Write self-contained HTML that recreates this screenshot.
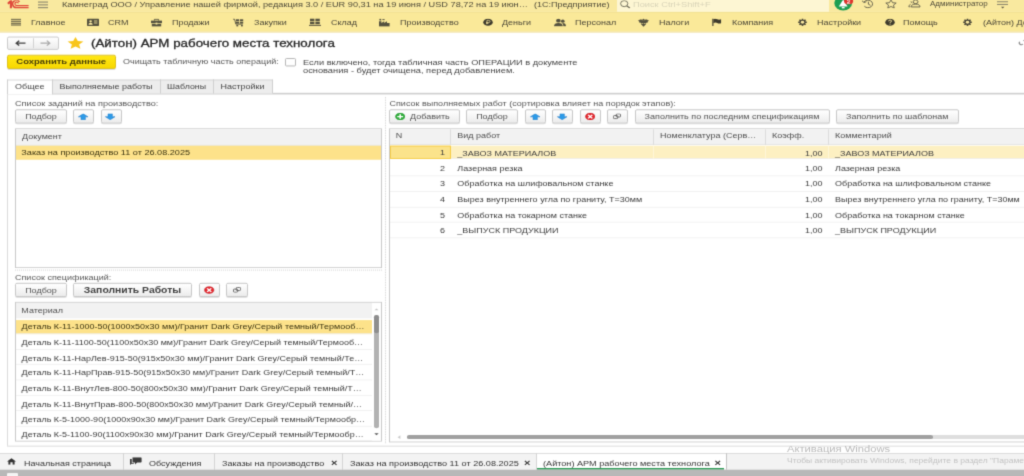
<!DOCTYPE html>
<html lang="ru">
<head>
<meta charset="utf-8">
<title>(Айтон) АРМ рабочего места технолога</title>
<style>
*{box-sizing:border-box;margin:0;padding:0}
html,body{width:1024px;height:476px;overflow:hidden;background:#fff}
body{font-family:"Liberation Sans",sans-serif;font-size:9px;color:#3a3a3a;position:relative}
#W{position:absolute;left:-8px;top:-8px;width:1040px;height:595.36px;background:#fff;transform-origin:0 0;transform:scaleY(0.826389);filter:url(#bl)}
#V{position:absolute;left:8px;top:9.68px;width:1024px;height:576.00px}
.a{position:absolute;white-space:nowrap}
.t{position:absolute;white-space:nowrap;line-height:14.52px;height:14.52px}
#bar1{left:-8px;top:-4.84px;width:1040px;height:19.36px;background:#f9e99f}
#bar2{left:-8px;top:14.52px;width:1040px;height:24.20px;background:#fae999;border-top:1px solid #f0de92}
#barline{left:-8px;top:38.24px;width:1040px;height:1.45px;background:#ecd98c}
#search{left:617px;top:-4.84px;width:212px;height:18.88px;background:#fdf6d3}
.mi{position:absolute;top:19.97px;height:14.52px;line-height:14.52px;color:#4a4636;white-space:nowrap}
.btn{position:absolute;height:17.18px;border:1px solid #c3c3c3;border-radius:2px;background:linear-gradient(#ffffff,#ececec);text-align:center;line-height:16.46px;color:#525252;white-space:nowrap;box-shadow:0 1px 0 #d9d9d9}
.tab{position:absolute;top:96.20px;height:17.18px;line-height:15.25px;text-align:center;border:1px solid #cfcfcf;border-bottom:none;background:#ededed;color:#444}
.tab.act{background:#fff;height:18.39px;z-index:2}
.grid{position:absolute;border:1px solid #c9c9c9;background:#fff;overflow:hidden}
.hd{position:absolute;background:#f2f2f2;color:#4d4d4d}
.row{position:absolute;left:0;height:18.64px;line-height:18.15px;border-bottom:1px solid #efefef;white-space:nowrap}
.bt{position:absolute;top:550.10px;height:20.57px;line-height:20.57px;white-space:nowrap;color:#333}
.sep{position:absolute;top:548.17px;width:1px;height:20.57px;background:#d4d4d4}
</style>
</head>
<body>
<svg preserveAspectRatio="none" width="0" height="0" style="position:absolute"><defs><filter id="bl" x="0" y="0" width="100%" height="100%" color-interpolation-filters="sRGB"><feConvolveMatrix order="3" kernelMatrix="1 5 1 5 25 5 1 5 1" divisor="49" edgeMode="duplicate" preserveAlpha="true"/></filter></defs></svg>
<div id="W"><div id="V">
<!-- TOP BARS -->
<div class="a" id="bar1"></div>
<div class="a" id="bar2"></div>
<div class="a" id="barline"></div>
<div class="a" id="search"></div>

<!-- 1C logo -->
<svg preserveAspectRatio="none" class="a" style="left:7px;top:0;width:23px;height:10.89px" viewBox="0 0 23 9">
  <path d="M0.9 3.4 L3.9 0.6 L3.9 8" fill="none" stroke="#e0483a" stroke-width="2.1"/>
  <path d="M12.4 1.6 A3.7 3.7 0 1 0 9.6 7.3 L21.6 7.3" fill="none" stroke="#e0483a" stroke-width="1.5"/>
  <path d="M11.3 3.2 A1.7 1.7 0 1 0 9.8 5.2 L21.6 5.2" fill="none" stroke="#e0483a" stroke-width="1.1"/>
</svg>
<!-- hamburger -->
<svg preserveAspectRatio="none" class="a" style="left:38px;top:1.21px;width:10px;height:9.68px" viewBox="0 0 10 8"><path d="M0 1h10M0 3.8h10M0 6.6h10" stroke="#7d7a68" stroke-width="1"/></svg>
<div class="t" style="left:62px;top:-1.94px;font-size:9.2px;color:#4d4937">Камнеград ООО / Управление нашей фирмой, редакция 3.0 / EUR 90,31 на 19 июня / USD 78,72 на 19 июн…</div>
<div class="t" style="left:534px;top:-1.94px;font-size:9px;color:#4d4937">(1С:Предприятие)</div>
<!-- search -->
<svg preserveAspectRatio="none" class="a" style="left:619px;top:0.48px;width:12px;height:10.16px" viewBox="0 0 12 10"><circle cx="5.2" cy="4" r="3.6" fill="none" stroke="#6a6756" stroke-width="1"/><path d="M7.8 6.6l3 2.6" stroke="#6a6756" stroke-width="1.3"/></svg>
<div class="t" style="left:633px;top:-1.21px;font-size:9.25px;color:#d9d4b8">Поиск Ctrl+Shift+F</div>
<!-- bell -->
<svg preserveAspectRatio="none" class="a" style="left:833px;top:-3.63px;width:22px;height:16.94px" viewBox="0 0 22 14">
  <ellipse cx="10.2" cy="6" rx="8.9" ry="7.5" fill="#1e9e52"/>
  <path d="M10.2 2.6 L14.6 9.6 L5.8 9.6 Z" fill="#fff"/><rect x="8.8" y="10" width="2.8" height="1.4" fill="#fff"/>
  <ellipse cx="15.6" cy="4" rx="4.6" ry="3.4" fill="#e0352e"/>
  <path d="M14 3.8q1.4-1.6 2.8 0q0.2 0.8-2.8 2.4h3.2" fill="none" stroke="#fff" stroke-width="0.8"/>
</svg>
<!-- history -->
<svg preserveAspectRatio="none" class="a" style="left:861px;top:-0.36px;width:14px;height:10.89px" viewBox="0 0 14 11">
  <path d="M3 3.2 A4.6 4.6 0 1 1 3.4 8.4" fill="none" stroke="#5c5947" stroke-width="1"/>
  <path d="M1 1.6l2 2.2 2.4-1" fill="none" stroke="#5c5947" stroke-width="1"/>
  <path d="M7.4 2.8v3l2 1.4" fill="none" stroke="#5c5947" stroke-width="1"/>
</svg>
<!-- star outline -->
<svg preserveAspectRatio="none" class="a" style="left:884.5px;top:-0.24px;width:12px;height:10.65px" viewBox="0 0 13 11">
  <path d="M6.5 0.6l1.7 3.5 3.9.4-2.9 2.6.8 3.7-3.5-2-3.5 2 .8-3.7L.9 4.5l3.9-.4z" fill="none" stroke="#5c5947" stroke-width="1"/>
</svg>
<!-- user -->
<svg preserveAspectRatio="none" class="a" style="left:908px;top:-0.24px;width:14px;height:10.41px" viewBox="0 0 14 11">
  <circle cx="7.6" cy="3" r="2.4" fill="none" stroke="#5c5947" stroke-width="1"/>
  <path d="M3.2 9.6q0-3.6 4.4-3.6t4.4 3.6z" fill="none" stroke="#5c5947" stroke-width="1"/>
  <path d="M4.4 4.4q-1.6-.4-1.4-2M2.6 6.2q-1.8.8-1.8 3.2h1.6" fill="none" stroke="#5c5947" stroke-width="0.9"/>
</svg>
<div class="t" style="left:930px;top:-1.94px;font-size:8px;color:#4d4937">Администратор</div>
<!-- menu lines -->
<svg preserveAspectRatio="none" class="a" style="left:997px;top:0;width:12px;height:12.10px" viewBox="0 0 12 10"><path d="M0 1.5h11M0 4.2h11" stroke="#7d7a68" stroke-width="0.9"/><path d="M4 6.4h3.4l-1.7 1.8z" fill="#5c5947"/></svg>

<!-- SECTION MENU -->
<svg preserveAspectRatio="none" class="a" style="left:11px;top:22.63px;width:10px;height:9.20px" viewBox="0 0 10 9"><path d="M0 1h10M0 3.3h10M0 5.6h10M0 7.9h10" stroke="#55523f" stroke-width="1.2"/></svg>
<div class="mi" style="left:31px">Главное</div>
<svg preserveAspectRatio="none" class="a" style="left:87px;top:22.63px;width:12px;height:9.20px" viewBox="0 0 12 9"><rect x="0" y="0" width="12" height="9" rx="1" fill="#55523f"/><circle cx="3.6" cy="3.4" r="1.3" fill="#fae9a0"/><path d="M1.5 7.4q0-2.2 2.1-2.2t2.1 2.2z" fill="#fae9a0"/><path d="M7 3h3.4M7 5.4h3.4" stroke="#fae9a0" stroke-width="0.9"/></svg>
<div class="mi" style="left:108px">CRM</div>
<svg preserveAspectRatio="none" class="a" style="left:151px;top:22.14px;width:11px;height:10.16px" viewBox="0 0 11 10"><path d="M3.4 2.6v-1.6h4.2v1.6" fill="none" stroke="#55523f" stroke-width="1"/><rect x="0" y="2.6" width="11" height="3" fill="#55523f"/><rect x="0.8" y="6.4" width="9.4" height="3.2" fill="#55523f"/><rect x="4.6" y="5" width="1.8" height="2.2" fill="#fae9a0"/></svg>
<div class="mi" style="left:172px">Продажи</div>
<svg preserveAspectRatio="none" class="a" style="left:233px;top:22.14px;width:11px;height:10.16px" viewBox="0 0 11 10"><path d="M0 0.8h1.6l1.2 6h7" fill="none" stroke="#55523f" stroke-width="1"/><rect x="3" y="1" width="3.2" height="2.2" fill="#55523f"/><rect x="7" y="1" width="3.2" height="2.2" fill="#55523f"/><rect x="3" y="3.9" width="3.2" height="2.2" fill="#55523f"/><rect x="7" y="3.9" width="3.2" height="2.2" fill="#55523f"/><rect x="3.4" y="7.8" width="1.8" height="1.8" fill="#55523f"/><rect x="8" y="7.8" width="1.8" height="1.8" fill="#55523f"/></svg>
<div class="mi" style="left:254px">Закупки</div>
<svg preserveAspectRatio="none" class="a" style="left:309px;top:22.63px;width:12px;height:9.20px" viewBox="0 0 12 9"><rect x="1" y="0" width="4.4" height="3" fill="#55523f"/><rect x="6.4" y="0" width="4.4" height="3" fill="#55523f"/><rect x="1" y="3.8" width="4.4" height="3" fill="#55523f"/><rect x="6.4" y="3.8" width="4.4" height="3" fill="#55523f"/><rect x="0" y="7.6" width="12" height="1.2" fill="#55523f"/></svg>
<div class="mi" style="left:331px">Склад</div>
<svg preserveAspectRatio="none" class="a" style="left:379px;top:22.14px;width:11px;height:10.16px" viewBox="0 0 11 10"><path d="M0 9.6V3.4h2.4v2l2.8-2v2l2.8-2v2h2.6V9.6z" fill="#55523f"/><rect x="0.4" y="0.4" width="1.8" height="2" fill="#55523f"/><rect x="3.4" y="0.8" width="2.2" height="1.2" fill="#55523f"/></svg>
<div class="mi" style="left:400px">Производство</div>
<svg preserveAspectRatio="none" class="a" style="left:482.5px;top:22.63px;width:10px;height:9.20px" viewBox="0 0 11 11"><circle cx="5.5" cy="5.5" r="5.2" fill="#3d3a2c"/><path d="M4.3 8.4V2.8h1.9a1.5 1.5 0 0 1 0 3.1H3.4M3.4 7.1h2.6" fill="none" stroke="#fae9a0" stroke-width="0.9"/></svg>
<div class="mi" style="left:502px">Деньги</div>
<svg preserveAspectRatio="none" class="a" style="left:554px;top:22.14px;width:12px;height:10.16px" viewBox="0 0 12 10"><circle cx="4.4" cy="2.6" r="2.3" fill="#55523f"/><path d="M0 9.4q0-4 4.4-4t4.4 4z" fill="#55523f"/><circle cx="8.8" cy="3.2" r="1.8" fill="#55523f"/><path d="M8.2 5.4q3.8-.2 3.8 4H9.4q0-2.4-1.2-4z" fill="#55523f"/></svg>
<div class="mi" style="left:575px">Персонал</div>
<svg preserveAspectRatio="none" class="a" style="left:638px;top:22.14px;width:11px;height:10.16px" viewBox="0 0 11 10"><path d="M5.5 0.6v9M5.5 3.2q-2.6-3-4.9-.6 1.4.6 1 2 1.4-.6 1.6 1.2 1-.6 2.3-.4M5.5 3.2q2.6-3 4.9-.6-1.4.6-1 2-1.4-.6-1.6 1.2-1-.6-2.3-.4M3.2 6.6l2.3 2.8 2.3-2.8" fill="#55523f" stroke="#55523f" stroke-width="0.8"/><circle cx="5.5" cy="1.4" r="1.1" fill="#55523f"/></svg>
<div class="mi" style="left:659px">Налоги</div>
<svg preserveAspectRatio="none" class="a" style="left:712.3px;top:22.14px;width:9.6px;height:9.20px" viewBox="0 0 11 10"><path d="M1 0v10" stroke="#3d3a2c" stroke-width="1.3"/><path d="M1.6 0.8q2.4-1 4.4.2t4.4 0v5.2q-2.4 1-4.4-.2t-4.4.2z" fill="#3d3a2c"/></svg>
<div class="mi" style="left:732px">Компания</div>
<svg preserveAspectRatio="none" class="a gear" style="left:798px;top:22.63px;width:9px;height:9.20px" viewBox="-5.5 -5.5 11 11"><g fill="#454234"><circle r="3.7"/><g id="teeth"><rect x="-1" y="-5.3" width="2" height="10.6"/><rect x="-1" y="-5.3" width="2" height="10.6" transform="rotate(45)"/><rect x="-1" y="-5.3" width="2" height="10.6" transform="rotate(90)"/><rect x="-1" y="-5.3" width="2" height="10.6" transform="rotate(135)"/></g></g><circle r="2.1" fill="#fae9a0"/></svg>
<div class="mi" style="left:817px">Настройки</div>
<svg preserveAspectRatio="none" class="a" style="left:884.5px;top:22.63px;width:10px;height:9.20px" viewBox="0 0 11 11"><circle cx="5.5" cy="5.5" r="5.2" fill="#3d3a2c"/><path d="M3.8 4.2q0-1.8 1.8-1.8t1.7 1.6q0 1-1.7 1.6v.9" fill="none" stroke="#fae9a0" stroke-width="1.1"/><rect x="5" y="7.6" width="1.2" height="1.2" fill="#fae9a0"/></svg>
<div class="mi" style="left:903px">Помощь</div>
<svg preserveAspectRatio="none" class="a gear" style="left:963px;top:22.63px;width:9px;height:9.20px" viewBox="-5.5 -5.5 11 11"><g fill="#454234"><circle r="3.7"/><rect x="-1" y="-5.3" width="2" height="10.6"/><rect x="-1" y="-5.3" width="2" height="10.6" transform="rotate(45)"/><rect x="-1" y="-5.3" width="2" height="10.6" transform="rotate(90)"/><rect x="-1" y="-5.3" width="2" height="10.6" transform="rotate(135)"/></g><circle r="2.1" fill="#fae9a0"/></svg>
<div class="mi" style="left:983px">(Айтон) Документы</div>

<!-- CONTENT PLACEHOLDER -->

<!-- HEADER ROW -->
<div class="a" style="left:7.2px;top:44.77px;width:52px;height:15.25px;border:1px solid #c6c6c6;border-radius:2px;background:linear-gradient(#fff,#ececec)"></div>
<div class="a" style="left:33px;top:45.98px;width:1px;height:12.83px;background:#d2d2d2"></div>
<svg preserveAspectRatio="none" class="a" style="left:15px;top:48.65px;width:11px;height:7.74px" viewBox="0 0 11 7"><path d="M10.5 3.5H2M4.2 0.8L1.2 3.5l3 2.7" fill="none" stroke="#3f3f3f" stroke-width="1.4"/></svg>
<svg preserveAspectRatio="none" class="a" style="left:40px;top:48.65px;width:11px;height:7.74px" viewBox="0 0 11 7"><path d="M0.5 3.5H9M6.8 0.8l3 2.7-3 2.7" fill="none" stroke="#a9a9a9" stroke-width="1.3"/></svg>
<svg preserveAspectRatio="none" class="a" style="left:67px;top:44.77px;width:17px;height:15.13px" viewBox="0 0 17 15"><path d="M8.5 0.4l2.3 5 5.6.5-4.3 3.6 1.3 5.2-4.9-2.8-4.9 2.8 1.3-5.2L.6 5.9l5.6-.5z" fill="#f8c51c"/></svg>
<div class="a" style="left:91px;top:43.32px;font-size:13.35px;line-height:19.36px;color:#262626;-webkit-text-stroke:0.35px #262626">(Айтон) АРМ рабочего места технолога</div>
<svg preserveAspectRatio="none" class="a" style="left:1018px;top:47.80px;width:11px;height:8.47px" viewBox="0 0 11 8"><path d="M5.6 2.2a2 2 0 0 1 3.2 2.6l-1.4 1.4M5 5.6a2 2 0 0 1-3.2-2.6" fill="none" stroke="#8a8a8a" stroke-width="1.2"/></svg>
<!-- SAVE ROW -->
<div class="a" style="left:6.8px;top:66.55px;width:108.8px;height:16.34px;border:1px solid #dcbc00;border-radius:2px;background:linear-gradient(#ffe715,#f8d800);text-align:center;line-height:13.92px;font-weight:bold;font-size:9.5px;color:#4a4008;box-shadow:0 1px 0 #cfcfcf">Сохранить данные</div>
<div class="t" style="left:123px;top:67.76px;color:#555">Очищать табличную часть операций:</div>
<div class="a" style="left:285px;top:69.94px;width:11px;height:10.65px;border:1px solid #b0b0b0;border-radius:1.5px;background:#fff"></div>
<div class="t" style="left:303px;top:67.89px;color:#444;font-size:9.2px">Если включено, тогда табличная часть ОПЕРАЦИИ в документе</div>
<div class="t" style="left:303px;top:78.29px;color:#444;font-size:9.27px">основания - будет очищена, перед добавлением.</div>
<!-- TABS -->
<div class="a" style="left:7px;top:112.78px;width:1030px;height:1.21px;background:#cfcfcf"></div>
<div class="tab act" style="left:7px;width:45.5px">Общее</div>
<div class="tab" style="left:51.5px;width:109px">Выполняемые работы</div>
<div class="tab" style="left:159.5px;width:54px;font-size:8.8px">Шаблоны</div>
<div class="tab" style="left:212.5px;width:60px">Настройки</div>
<div class="a" style="left:7px;top:113.75px;width:1px;height:425.95px;background:#dadada"></div>
<div class="a" style="left:7px;top:539.46px;width:1030px;height:1.21px;background:#d4d4d4"></div>
<!-- LEFT PANEL -->
<div class="t" style="left:15px;top:117.98px;color:#555;font-size:9.15px">Список заданий на производство:</div>
<div class="btn" style="left:15px;top:132.50px;width:52px;">Подбор</div>
<div class="btn" style="left:73px;top:132.50px;width:21px;"></div>
<div class="btn" style="left:100.5px;top:132.50px;width:21.5px;"></div>
<svg preserveAspectRatio="none" class="a" style="left:78.3px;top:136.98px;width:10.4px;height:7.99px" viewBox="0 0 11 9"><path d="M5.5 0.4L10.6 4.6H7.8V8.6H3.2V4.6H0.4z" fill="#2d9be8" stroke="#1b78c8" stroke-width="0.6"/></svg>
<svg preserveAspectRatio="none" class="a" style="left:105.3px;top:136.98px;width:10.4px;height:7.99px" viewBox="0 0 11 9"><path d="M5.5 8.6L10.6 4.4H7.8V0.4H3.2V4.4H0.4z" fill="#2d9be8" stroke="#1b78c8" stroke-width="0.6"/></svg>
<div class="grid" style="left:15px;top:154.89px;width:367px;height:169.41px">
  <div class="hd" style="left:0;top:0;width:365px;height:19.97px;line-height:19.97px;padding-left:6px;border-bottom:1px solid #e2e2e2">Документ</div>
  <div class="row" style="top:20.81px;width:365px;height:16.94px;line-height:16.46px;background:#fde28a;padding-left:5.3px;font-size:9.15px;color:#3a3310;border-bottom:none">Заказ на производство 11 от 26.08.2025</div>
</div>
<div class="t" style="left:15px;top:328.54px;color:#555">Список спецификаций:</div>
<div class="btn" style="left:15px;top:342.45px;width:52px;">Подбор</div>
<div class="btn" style="left:73px;top:342.45px;width:119px;font-weight:bold;font-size:10.4px;color:#3f3f3f">Заполнить Работы</div>
<div class="btn" style="left:199px;top:342.45px;width:21px;"></div>
<div class="btn" style="left:226px;top:342.45px;width:21.5px;"></div>
<svg preserveAspectRatio="none" class="a" style="left:204.3px;top:346.33px;width:10.4px;height:9.44px" viewBox="0 0 11 11"><circle cx="5.5" cy="5.5" r="5" fill="#e3262d" stroke="#b9151c" stroke-width="0.6"/><path d="M3.3 3l4.4 5M7.7 3L3.3 8" stroke="#fff" stroke-width="1.7"/></svg>
<svg preserveAspectRatio="none" class="a" style="left:233px;top:347.66px;width:8px;height:6.78px" viewBox="0 0 9 7"><rect x="0.5" y="2.6" width="4.8" height="3.9" rx="1.1" fill="none" stroke="#5e5e5e" stroke-width="1.1"/><rect x="3.7" y="0.5" width="4.8" height="3.9" rx="1.1" fill="none" stroke="#5e5e5e" stroke-width="1.1"/></svg>
<div class="a" style="left:15px;top:326.24px;width:367px;height:1.21px;border-top:1px dotted #d0d0d0"></div>
<div class="grid" id="g2" style="left:15px;top:365.45px;width:367px;height:168.81px">
  <div class="hd" style="left:0;top:0;width:358px;height:19.36px;line-height:19.36px;padding-left:5.3px">Материал</div>
  <div class="row" style="top:20.45px;width:358px;height:17.55px;background:#fde28a;"></div>
  <div class="t" style="left:5.6px;top:21.78px;color:#3a3310">Деталь К-11-1000-50(1000x50x30 мм)/Гранит Dark Grey/Серый темный/Термооб…</div>
  <div class="row" style="top:38.00px;width:358px;height:18.64px;"></div>
  <div class="t" style="left:5.6px;top:41.02px;">Деталь К-11-1100-50(1100x50x30 мм)/Гранит Dark Grey/Серый темный/Термооб…</div>
  <div class="row" style="top:56.63px;width:358px;height:18.64px;"></div>
  <div class="t" style="left:5.6px;top:59.66px;">Деталь К-11-НарЛев-915-50(915x50x30 мм)/Гранит Dark Grey/Серый темный/Те…</div>
  <div class="row" style="top:75.27px;width:358px;height:18.64px;"></div>
  <div class="t" style="left:5.6px;top:78.29px;">Деталь К-11-НарПрав-915-50(915x50x30 мм)/Гранит Dark Grey/Серый темный/Т…</div>
  <div class="row" style="top:93.90px;width:358px;height:18.64px;"></div>
  <div class="t" style="left:5.6px;top:96.93px;">Деталь К-11-ВнутЛев-800-50(800x50x30 мм)/Гранит Dark Grey/Серый темный/Т…</div>
  <div class="row" style="top:112.54px;width:358px;height:18.64px;"></div>
  <div class="t" style="left:5.6px;top:115.56px;">Деталь К-11-ВнутПрав-800-50(800x50x30 мм)/Гранит Dark Grey/Серый темный/…</div>
  <div class="row" style="top:131.17px;width:358px;height:18.64px;"></div>
  <div class="t" style="left:5.6px;top:134.20px;">Деталь К-5-1000-90(1000x90x30 мм)/Гранит Dark Grey/Серый темный/Термообр…</div>
  <div class="row" style="top:149.81px;width:358px;height:18.64px;"></div>
  <div class="t" style="left:5.6px;top:152.83px;">Деталь К-5-1100-90(1100x90x30 мм)/Гранит Dark Grey/Серый темный/Термообр…</div>
  <div class="a" style="left:356px;top:0;width:10px;height:166.99px;background:#fff"></div>
  <div class="a" style="left:357.5px;top:15.13px;width:5px;height:136.74px;background:#b2b2b2;border-radius:2.5px"></div>
  <div class="a" style="left:357.5px;top:15.13px;width:5px;height:21.78px;background:#8e8e8e;border-radius:2.5px"></div>
  <svg preserveAspectRatio="none" class="a" style="left:358px;top:6.05px;width:5px;height:4.11px" viewBox="0 0 5 4"><path d="M0.5 3L2.5 1l2 2z" fill="#c4c4c4"/></svg>
  <svg preserveAspectRatio="none" class="a" style="left:358px;top:156.71px;width:5px;height:4.11px" viewBox="0 0 5 4"><path d="M0.3 0.8h4.4L2.5 3.4z" fill="#555"/></svg>
</div>
<!-- SPLITTER -->
<div class="a" style="left:385px;top:117.38px;width:1px;height:418.69px;border-left:1px dotted #cdcdcd"></div>
<!-- RIGHT PANEL -->
<div class="t" style="left:389.5px;top:117.98px;color:#555;font-size:9px">Список выполняемых работ (сортировка влияет на порядок этапов):</div>
<div class="btn" style="left:389px;top:132.50px;width:71px;text-align:left;padding-left:20px">Добавить</div>
<svg preserveAspectRatio="none" class="a" style="left:394.8px;top:136.26px;width:10.4px;height:9.44px" viewBox="0 0 11 11"><circle cx="5.5" cy="5.5" r="5" fill="#2fae3a" stroke="#1e8a2a" stroke-width="0.6"/><path d="M5.5 2.4v6.2M2.4 5.5h6.2" stroke="#fff" stroke-width="1.7"/></svg>
<div class="btn" style="left:466px;top:132.50px;width:52px;">Подбор</div>
<div class="btn" style="left:524.5px;top:132.50px;width:21px;"></div>
<div class="btn" style="left:551.5px;top:132.50px;width:21px;"></div>
<div class="btn" style="left:579.5px;top:132.50px;width:21px;"></div>
<div class="btn" style="left:606.5px;top:132.50px;width:21px;"></div>
<svg preserveAspectRatio="none" class="a" style="left:529.8px;top:136.98px;width:10.4px;height:7.99px" viewBox="0 0 11 9"><path d="M5.5 0.4L10.6 4.6H7.8V8.6H3.2V4.6H0.4z" fill="#2d9be8" stroke="#1b78c8" stroke-width="0.6"/></svg>
<svg preserveAspectRatio="none" class="a" style="left:556.8px;top:136.98px;width:10.4px;height:7.99px" viewBox="0 0 11 9"><path d="M5.5 8.6L10.6 4.4H7.8V0.4H3.2V4.4H0.4z" fill="#2d9be8" stroke="#1b78c8" stroke-width="0.6"/></svg>
<svg preserveAspectRatio="none" class="a" style="left:584.8px;top:136.26px;width:10.4px;height:9.44px" viewBox="0 0 11 11"><circle cx="5.5" cy="5.5" r="5" fill="#e3262d" stroke="#b9151c" stroke-width="0.6"/><path d="M3.3 3l4.4 5M7.7 3L3.3 8" stroke="#fff" stroke-width="1.7"/></svg>
<svg preserveAspectRatio="none" class="a" style="left:613px;top:137.71px;width:8px;height:6.78px" viewBox="0 0 9 7"><rect x="0.5" y="2.6" width="4.8" height="3.9" rx="1.1" fill="none" stroke="#5e5e5e" stroke-width="1.1"/><rect x="3.7" y="0.5" width="4.8" height="3.9" rx="1.1" fill="none" stroke="#5e5e5e" stroke-width="1.1"/></svg>
<div class="btn" style="left:634.5px;top:132.50px;width:195px;">Заполнить по последним спецификациям</div>
<div class="btn" style="left:836px;top:132.50px;width:122.5px;">Заполнить по шаблонам</div>
<div class="grid" id="g3" style="left:389px;top:154.89px;width:640px;height:379.97px">
  <div class="hd" style="left:0;top:0;width:640px;height:19.60px;border-bottom:1px solid #e4e4e4"></div>
  <div class="t" style="left:5.8px;top:1.57px;color:#4d4d4d">N</div>
  <div class="t" style="left:67.3px;top:1.57px;color:#4d4d4d">Вид работ</div>
  <div class="t" style="left:270px;top:1.57px;color:#4d4d4d">Номенклатура (Серв…</div>
  <div class="t" style="left:382px;top:1.57px;color:#4d4d4d">Коэфф.</div>
  <div class="t" style="left:445px;top:1.57px;color:#4d4d4d">Комментарий</div>
  <div class="a" style="left:60px;top:0;width:1px;height:19.36px;background:#dcdcdc"></div>
  <div class="a" style="left:263.2px;top:0;width:1px;height:19.36px;background:#dcdcdc"></div>
  <div class="a" style="left:375.2px;top:0;width:1px;height:19.36px;background:#dcdcdc"></div>
  <div class="a" style="left:438.2px;top:0;width:1px;height:19.36px;background:#dcdcdc"></div>
  <div class="row" style="top:20.57px;width:640px;height:16.15px;background:#fdf0c2;"></div>
  <div class="t" style="left:67.3px;top:22.14px">_ЗАВОЗ МАТЕРИАЛОВ</div>
  <div class="t" style="left:375px;width:57.5px;text-align:right;top:22.14px">1,00</div>
  <div class="t" style="left:445px;top:22.14px">_ЗАВОЗ МАТЕРИАЛОВ</div>
  <div class="row" style="top:38.66px;width:640px;height:18.82px;"></div>
  <div class="t" style="left:7px;width:48px;text-align:right;top:40.96px">2</div>
  <div class="t" style="left:67.3px;top:40.96px">Лазерная резка</div>
  <div class="t" style="left:375px;width:57.5px;text-align:right;top:40.96px">1,00</div>
  <div class="t" style="left:445px;top:40.96px">Лазерная резка</div>
  <div class="row" style="top:57.48px;width:640px;height:18.82px;"></div>
  <div class="t" style="left:7px;width:48px;text-align:right;top:59.78px">3</div>
  <div class="t" style="left:67.3px;top:59.78px">Обработка на шлифовальном станке</div>
  <div class="t" style="left:375px;width:57.5px;text-align:right;top:59.78px">1,00</div>
  <div class="t" style="left:445px;top:59.78px">Обработка на шлифовальном станке</div>
  <div class="row" style="top:76.30px;width:640px;height:18.82px;"></div>
  <div class="t" style="left:7px;width:48px;text-align:right;top:78.59px">4</div>
  <div class="t" style="left:67.3px;top:78.59px">Вырез внутреннего угла по граниту, T=30мм</div>
  <div class="t" style="left:375px;width:57.5px;text-align:right;top:78.59px">1,00</div>
  <div class="t" style="left:445px;top:78.59px">Вырез внутреннего угла по граниту, T=30мм</div>
  <div class="row" style="top:95.11px;width:640px;height:18.82px;"></div>
  <div class="t" style="left:7px;width:48px;text-align:right;top:97.41px">5</div>
  <div class="t" style="left:67.3px;top:97.41px">Обработка на токарном станке</div>
  <div class="t" style="left:375px;width:57.5px;text-align:right;top:97.41px">1,00</div>
  <div class="t" style="left:445px;top:97.41px">Обработка на токарном станке</div>
  <div class="row" style="top:113.93px;width:640px;height:18.82px;"></div>
  <div class="t" style="left:7px;width:48px;text-align:right;top:116.23px">6</div>
  <div class="t" style="left:67.3px;top:116.23px">_ВЫПУСК ПРОДУКЦИИ</div>
  <div class="t" style="left:375px;width:57.5px;text-align:right;top:116.23px">1,00</div>
  <div class="t" style="left:445px;top:116.23px">_ВЫПУСК ПРОДУКЦИИ</div>
  <div class="a" style="left:0;top:20.57px;width:60.5px;height:16.22px;background:#fbe38b;border:1.3px solid #f6cb42"></div>
  <div class="t" style="left:7px;width:48px;text-align:right;top:21.42px">1</div>
  <div class="a" style="left:263.2px;top:20.57px;width:1px;height:15.97px;background:#fff6d8"></div>
  <div class="a" style="left:375.2px;top:20.57px;width:1px;height:15.97px;background:#fff6d8"></div>
  <div class="a" style="left:438.2px;top:20.57px;width:1px;height:15.97px;background:#fff6d8"></div>
  <svg preserveAspectRatio="none" class="a" style="left:6.5px;top:370.29px;width:4px;height:5.32px" viewBox="0 0 4 5"><path d="M3.4 0.4v4.2L0.6 2.5z" fill="#c9c9c9"/></svg>
  <div class="a" style="left:17px;top:370.29px;width:630px;height:5.57px;background:#dedede;border-radius:2.3px"></div>
  <div class="a" style="left:17px;top:370.29px;width:526px;height:5.57px;background:#a0a0a0;border-radius:2.3px"></div>
</div>
<!-- BOTTOM TAB BAR -->
<div class="a" style="left:-8px;top:548.17px;width:1040px;height:20.57px;background:#f3f3f3;border-top:1px solid #d6d6d6"></div>
<svg preserveAspectRatio="none" class="a" style="left:7px;top:554.22px;width:9px;height:7.99px" viewBox="0 0 9 8"><path d="M4.5 0.2L9 4.2H7.6V8H5.6V5.2H3.4V8H1.4V4.2H0z" fill="#333"/></svg>
<div class="bt" style="left:24px">Начальная страница</div>
<div class="sep" style="left:122.5px"></div>
<svg preserveAspectRatio="none" class="a" style="left:130px;top:553.73px;width:11.6px;height:9.44px" viewBox="0 0 12 9"><path d="M2.6 0h8.6a.8.8 0 0 1 .8.8v4.4a.8.8 0 0 1-.8.8H7.4L5.2 8.4V6H2.6z" fill="#3b3b3b"/><path d="M0 2h1.8v4.6H4v1H1.6L0 9z" fill="#3b3b3b"/></svg>
<div class="bt" style="left:149px">Обсуждения</div>
<div class="sep" style="left:213.5px"></div>
<div class="bt" style="left:222px">Заказы на производство</div>
<div class="bt" style="left:331px;font-weight:bold;font-size:11px">×</div>
<div class="sep" style="left:342px"></div>
<div class="bt" style="left:350px;font-size:9.14px">Заказ на производство 11 от 26.08.2025</div>
<div class="bt" style="left:524px;font-weight:bold;font-size:11px">×</div>
<div class="sep" style="left:536px"></div>
<div class="a" style="left:537px;top:548.17px;width:189px;height:20.57px;background:#fff;border-top:1px solid #d6d6d6"></div>
<div class="bt" style="left:543px;font-size:9.13px">(Айтон) АРМ рабочего места технолога</div>
<div class="bt" style="left:714.5px;font-weight:bold;font-size:11px">×</div>
<div class="a" style="left:537px;top:566.08px;width:187px;height:1.82px;background:#2e9b57"></div>
<div class="sep" style="left:726px;background:#c4c4c4"></div>
<div class="a" style="left:787px;top:536.79px;font-size:11.2px;line-height:15.73px;color:#b9b9b9">Активация Windows</div>
<div class="a" style="left:787px;top:551.07px;font-size:8.5px;line-height:12.10px;color:#c2c2c2">Чтобы активировать Windows, перейдите в раздел "Параметры".</div>
<div class="a" style="left:-8px;top:568.74px;width:1040px;height:14.52px;background:#b8b8b8"></div>
<div class="a" style="left:7px;top:572.37px;width:11px;height:9.68px;background:#f4f4f4;border-radius:1px 1px 0 0"></div>
</div></div>
</body>
</html>
